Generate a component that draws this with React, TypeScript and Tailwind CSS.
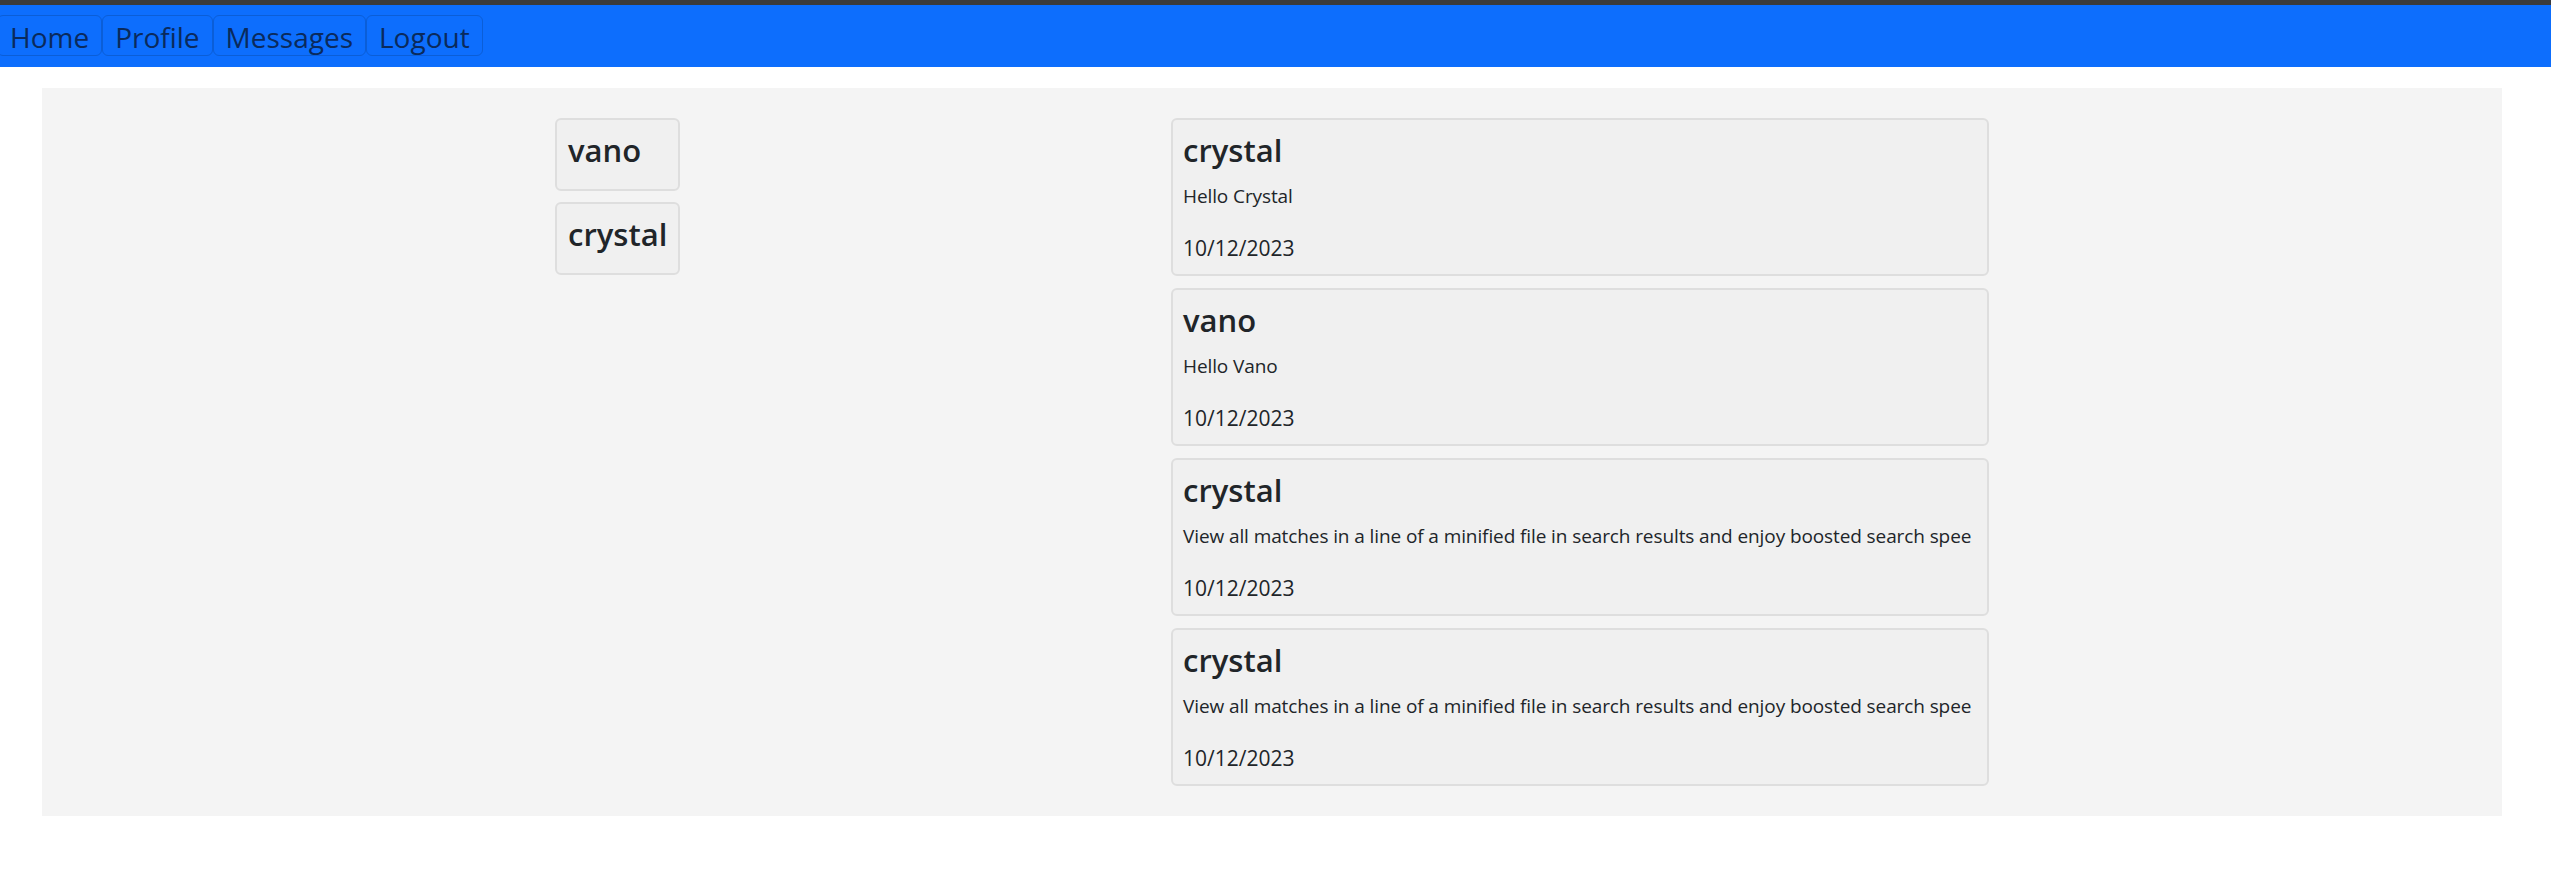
const USERS = ["vano", "crystal"];

const MESSAGES = [
  { from: "crystal", text: "Hello Crystal", date: "10/12/2023" },
  { from: "vano", text: "Hello Vano", date: "10/12/2023" },
  {
    from: "crystal",
    text: "View all matches in a line of a minified file in search results and enjoy boosted search spee",
    date: "10/12/2023",
  },
  {
    from: "crystal",
    text: "View all matches in a line of a minified file in search results and enjoy boosted search spee",
    date: "10/12/2023",
  },
];

const NAV = ["Home", "Profile", "Messages", "Logout"];

export default function App() {
  return (
    <div className="min-h-screen bg-white text-[#212529] font-['Open_Sans',sans-serif]">
      <div className="h-[5px] bg-[#3b3b3b]" />
      <nav className="flex h-[62px] items-center bg-[#0d6efd] pb-[1px]">
        {NAV.map((n, i) => (
          <button
            key={n}
            className={`h-[41px] rounded-[6px] border border-[#0b5ed7] px-[12px] pt-[3px] text-[28px] leading-none text-[#0a2a5c] ${i === 0 ? "-ml-[3px]" : ""}`}
          >
            {n}
          </button>
        ))}
      </nav>

      <main className="ml-[42px] mr-[49px] mt-[21px] bg-[#f4f4f4] py-[30px]">
        <div className="mx-auto grid w-[1434px] grid-cols-[616px_818px]">
          <div className="flex w-fit flex-col gap-[11px]">
            {USERS.map((u) => (
              <div
                key={u}
                className="h-[73px] rounded-[6px] border-2 border-[#dedede] bg-[#f0f0f0] px-[11px] pt-[12px]"
              >
                <h3 className="text-[31px] font-semibold leading-[1.2]">{u}</h3>
              </div>
            ))}
          </div>

          <div className="flex flex-col gap-[12px]">
            {MESSAGES.map((m, i) => (
              <div
                key={i}
                className="h-[158px] overflow-hidden rounded-[6px] border-2 border-[#dedede] bg-[#f0f0f0] px-[10px] pt-[12px]"
              >
                <h3 className="text-[31px] font-semibold leading-[1.2]">{m.from}</h3>
                <p className="mt-[13px] whitespace-nowrap text-[19px] leading-[1.5] tracking-[-0.1px]">{m.text}</p>
                <p className="mt-[22px] text-[21px] leading-[1.5]">{m.date}</p>
              </div>
            ))}
          </div>
        </div>
      </main>
    </div>
  );
}
